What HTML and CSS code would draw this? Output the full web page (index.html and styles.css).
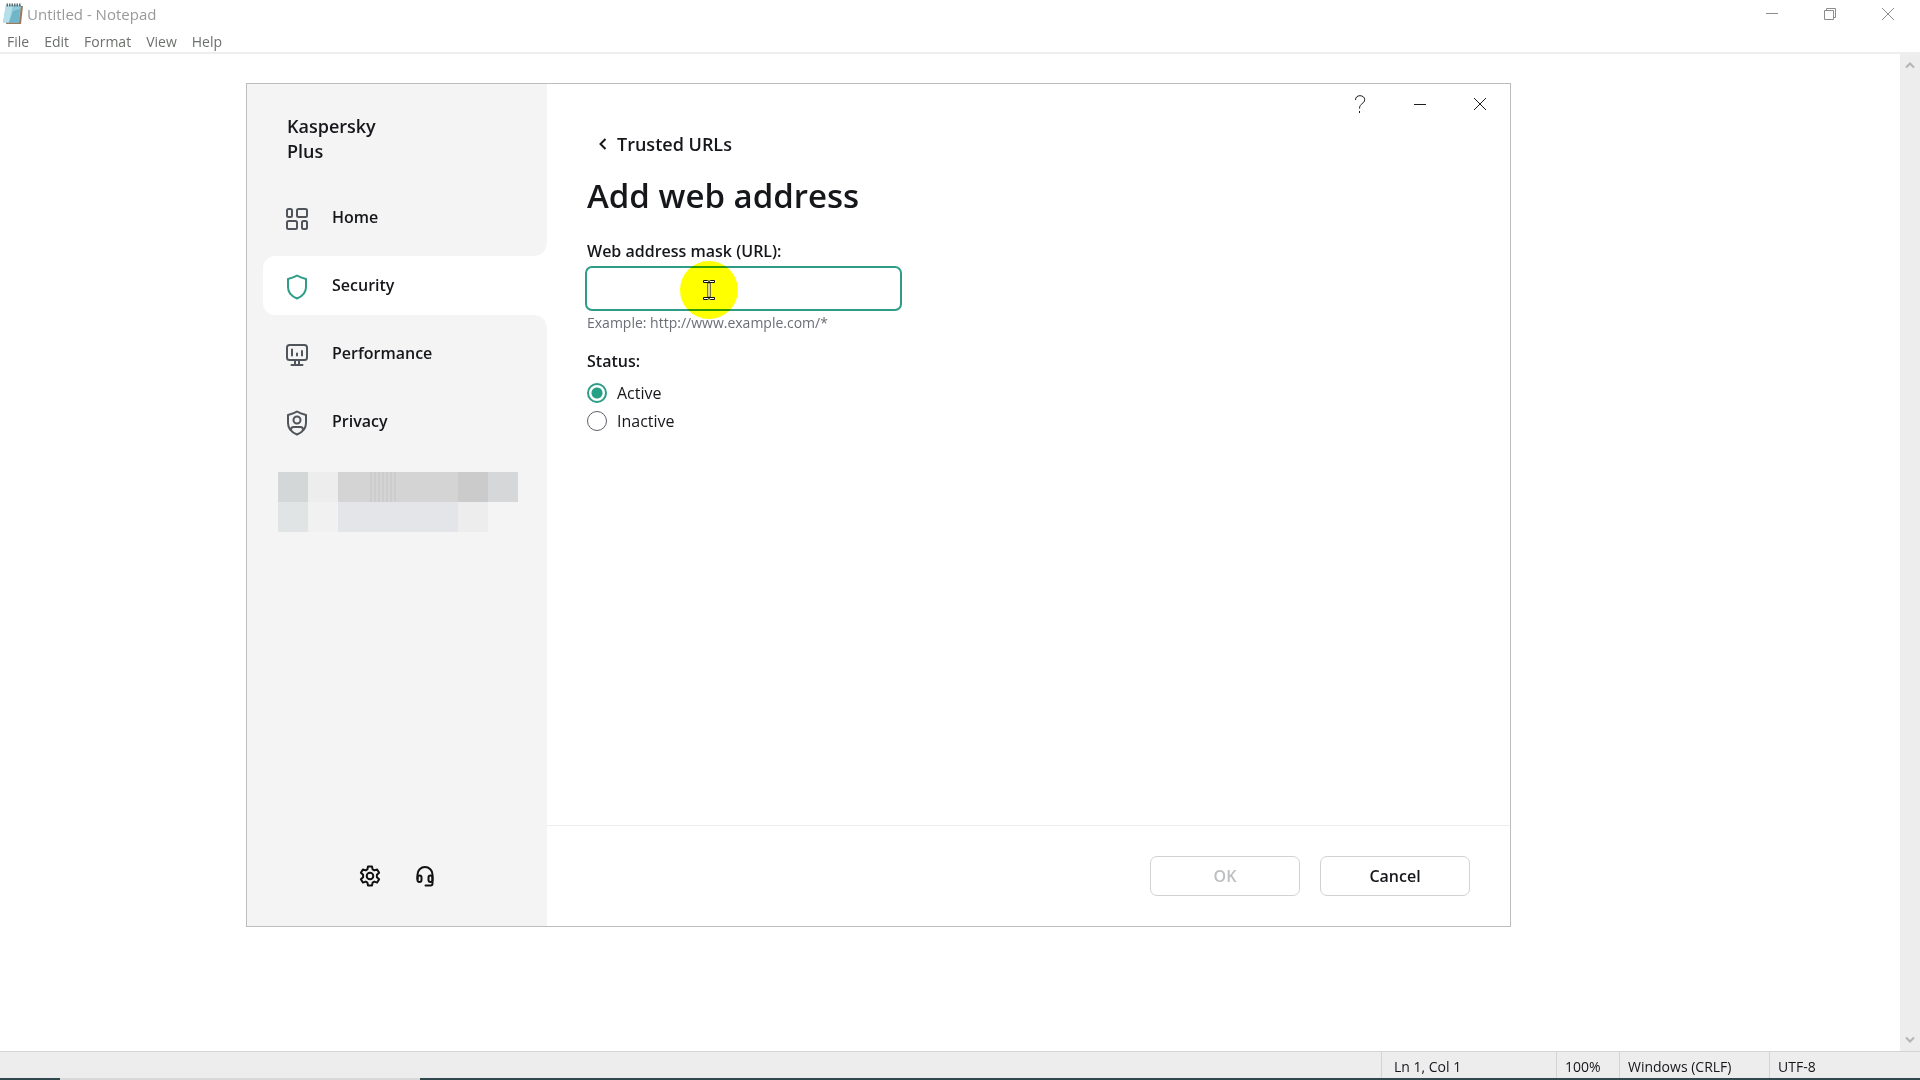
FILE: index.html
```html
<!DOCTYPE html>
<html lang="en">
<head>
<meta charset="utf-8">
<title>Untitled - Notepad</title>
<link rel="stylesheet" href="styles.css">
</head>
<body>
<div class="notepad">
  <header class="titlebar">
    <svg class="app-icon" width="20" height="22" viewBox="0 0 20 22">
      <path d="M5 3h15l-2 18H3z" fill="#9a7b62"/>
      <path d="M3 2h15l-2 17.500H0z" fill="#8fcbdc"/>
      <path d="M3 2h7L6 19.500H0z" fill="#b5e0ea"/>
      <path d="M10 8l7-2-1.500 13.500H6z" fill="#6fb6c8"/>
      <path d="M3.500 2h14" stroke="#5d6b70" stroke-width="3" stroke-dasharray="1.500 1"/>
    </svg>
    <span class="title">Untitled - Notepad</span>
    <div class="controls">
      <button aria-label="Minimize"><svg width="12" height="12" viewBox="0 0 12 12"><path d="M0 5.500h12"/></svg></button>
      <button aria-label="Restore"><svg width="12" height="12" viewBox="0 0 12 12"><path d="M.5 2.500h9v9h-9zM2.500 2.500v-2h9v9h-2"/></svg></button>
      <button aria-label="Close"><svg width="12" height="12" viewBox="0 0 12 12"><path d="M0 0l12 12M12 0L0 12"/></svg></button>
    </div>
  </header>
  <nav class="menubar">
    <button>File</button><button>Edit</button><button>Format</button><button>View</button><button>Help</button>
  </nav>
  <main class="editor">
    <div class="scrollbar">
      <svg width="10" height="8" viewBox="0 0 10 8"><path d="M1 6.500l4-4 4 4"/></svg>
      <svg width="10" height="8" viewBox="0 0 10 8"><path d="M1 1.500l4 4 4-4"/></svg>
    </div>
  </main>
  <footer class="statusbar">
    <span class="cell position">Ln 1, Col 1</span>
    <span class="cell zoom">100%</span>
    <span class="cell ending">Windows (CRLF)</span>
    <span class="cell encoding">UTF-8</span>
  </footer>
  <div class="taskbar"><span class="task-gap"></span><span class="task-active"></span></div>
</div>

<section class="window" aria-label="Kaspersky Plus">
  <aside class="sidebar">
    <div class="brand">Kaspersky<br>Plus</div>
    <nav class="nav">
      <a href="#home" class="item">
        <svg width="24" height="26" viewBox="0 0 24 26"><rect x="2" y="3" width="5" height="8" rx="1.500"/><rect x="12" y="3" width="10" height="8" rx="1.500"/><rect x="2" y="15" width="10" height="8" rx="1.500"/><rect x="17" y="15" width="5" height="8" rx="1.500"/></svg>
        <span>Home</span></a>
      <a href="#security" class="item active">
        <svg width="24" height="26" viewBox="0 0 24 26"><path d="M12 1.500C9 3.500 6 4.300 3 5v8c0 5.500 4 9.500 9 11.500 5-2 9-6 9-11.500V5c-3-.7-6-1.500-9-3.500z"/></svg>
        <span>Security</span></a>
      <a href="#performance" class="item">
        <svg width="24" height="26" viewBox="0 0 24 26"><rect x="2" y="3" width="20" height="15" rx="2.500"/><path d="M7 7.500v6M12 11.500v2M17 9v4.500M10 18v5M14 18v5M6.500 23h11"/></svg>
        <span>Performance</span></a>
      <a href="#privacy" class="item">
        <svg width="24" height="26" viewBox="0 0 24 26"><path d="M12 1.500C9 3.500 6 4.300 3 5v8c0 5.500 4 9.500 9 11.500 5-2 9-6 9-11.500V5c-3-.7-6-1.500-9-3.500z"/><circle cx="12" cy="10" r="3.500"/><path d="M6 19.500c0-2 1-2.500 2.500-2.500h7c1.500 0 2.500.5 2.500 2.500"/></svg>
        <span>Privacy</span></a>
    </nav>
    <div class="redacted" aria-hidden="true">
      <i class="b1"></i><i class="b2"></i><i class="b3"></i><i class="b3 striped"></i><i class="b3"></i><i class="b3"></i><i class="b4"></i><i class="b5"></i>
      <i class="b6"></i><i class="b7"></i><i class="b8"></i><i class="b8"></i><i class="b8"></i><i class="b8"></i><i class="b2"></i>
    </div>
    <div class="tools">
      <button aria-label="Settings"><svg width="22" height="22" viewBox="0 0 22 22"><path d="M9 1.500h4l.6 2.900 1.700 1 2.800-1 2 3.400-2.200 2v2.400l2.200 2-2 3.400-2.800-1-1.700 1-.6 2.900H9l-.6-2.900-1.700-1-2.800 1-2-3.400 2.200-2V9.800l-2.200-2 2-3.400 2.800 1 1.700-1z"/><circle cx="11" cy="11" r="3.300"/></svg></button>
      <button aria-label="Support"><svg width="22" height="22" viewBox="0 0 22 22"><path d="M3.500 14V9.500a7.500 7.500 0 0 1 15 0V18.500c0 1.500-.5 2-2 2H11.500"/><rect x="3.500" y="10.500" width="4" height="6.500" rx="2"/><rect x="14.500" y="10.500" width="4" height="6.500" rx="2"/></svg></button>
    </div>
  </aside>
  <form class="content">
    <div class="caption">
      <button type="button" aria-label="Help"><svg width="12" height="20" viewBox="0 0 12 20"><path d="M1.500 6C1.500 3 3.500 1.700 6 1.700S10.700 3.200 10.700 5.700C10.700 9.500 5.500 9.500 5.500 14.500M5.500 17v2"/></svg></button>
      <button type="button" aria-label="Minimize"><svg width="12" height="12" viewBox="0 0 12 12"><path d="M0 6.500h12"/></svg></button>
      <button type="button" aria-label="Close"><svg width="12" height="12" viewBox="0 0 12 12"><path d="M0 0l12 12M12 0L0 12"/></svg></button>
    </div>
    <div class="fields">
      <a href="#trusted" class="back"><svg width="8" height="12" viewBox="0 0 8 12"><path d="M6.500 1l-5 5 5 5"/></svg>Trusted URLs</a>
      <h1>Add web address</h1>
      <label class="label" for="url">Web address mask (URL):</label>
      <div class="url-box">
        <input id="url" class="url" type="text">
        <div class="pointer">
          <svg width="12" height="20" viewBox="0 0 12 20"><path d="M4.500 3h3v14h-3z" fill="#ddd890" stroke="#77733a"/><path d="M.5.500h4l1.500 1 1.500-1h4v2h-11zM.5 17.500h11v2h-4l-1.500-1-1.500 1h-4z" fill="#fff" stroke="#111"/></svg>
        </div>
      </div>
      <p class="hint">Example: http://www.example.com/*</p>
      <fieldset class="status">
        <legend class="label">Status:</legend>
        <label class="option"><input type="radio" name="status" checked>Active</label>
        <label class="option"><input type="radio" name="status">Inactive</label>
      </fieldset>
    </div>
    <div class="actions">
      <button type="button" disabled>OK</button>
      <button type="button">Cancel</button>
    </div>
  </form>
</section>
</body>
</html>
```

FILE: styles.css
```css
* { box-sizing: border-box; }
body {
  margin: 0;
  background: #fff;
  color: #16171b;
  font-family: "Open Sans", "Noto Sans", sans-serif;
  font-size: 16px;
}
button {
  padding: 0;
  border: 0;
  background: none;
  color: inherit;
  font: inherit;
}
a { color: inherit; text-decoration: none; }
svg { display: block; flex: none; fill: none; }

/* Notepad */
.notepad {
  display: flex;
  flex-direction: column;
  height: 100vh;
}
.titlebar {
  display: flex;
  align-items: center;
  height: 28px;
  padding-left: 3px;
  color: #999;
  font-size: 15px;
}
.title { padding-left: 4px; }
.controls {
  display: flex;
  margin-left: auto;
  align-self: stretch;
  padding-right: 3px;
}
.controls button {
  display: flex;
  align-items: center;
  justify-content: center;
  width: 58px;
}
.controls svg { stroke: #8c8c8c; }
.menubar {
  display: flex;
  gap: 15px;
  height: 26px;
  padding: 2px 7px 0;
  border-bottom: 2px solid #eee;
  color: #6c706c;
  font-size: 14px;
}
.editor {
  display: flex;
  justify-content: flex-end;
  flex: 1;
}
.scrollbar {
  display: flex;
  flex-direction: column;
  justify-content: space-between;
  align-items: center;
  width: 20px;
  padding: 7px 0;
  background: #ededed;
}
.scrollbar svg { stroke: #b4b4b4; stroke-width: 2; }
.statusbar {
  display: flex;
  justify-content: flex-end;
  height: 27px;
  border-top: 1px solid #d4d4d0;
  background: #ededed;
  font-size: 14px;
  line-height: 29px;
}
.cell { border-left: 1px solid #d4d4d4; padding-left: 8px; white-space: nowrap; }
.position { width: 175px; padding-left: 12px; }
.zoom { width: 63px; }
.ending { width: 150px; }
.encoding { width: 151px; }
.taskbar { display: flex; height: 2px; background: #33474f; }
.task-gap { width: 60px; }
.task-active { width: 360px; background: #d8d8d8; }

/* Kaspersky window */
.window {
  position: absolute;
  inset: 83px 409px 153px 246px;
  display: flex;
  border: 1px solid #bdbdbd;
  background: #fff;
}
.sidebar {
  display: flex;
  flex-direction: column;
  width: 300px;
  background: #f4f4f4;
}
.brand {
  padding: 30px 40px 0;
  font-size: 18px;
  font-weight: 600;
  line-height: 25px;
}
.nav {
  display: flex;
  flex-direction: column;
  gap: 9px;
  padding: 24px 0 0 16px;
}
.item {
  position: relative;
  display: flex;
  align-items: center;
  gap: 23px;
  height: 59px;
  padding-left: 22px;
  padding-top: 2px;
  font-weight: 600;
}
.item span { padding-bottom: 4px; }
.item svg { stroke: #50555c; stroke-width: 2; stroke-linecap: round; stroke-linejoin: round; }
.item.active { border-radius: 12px 0 0 12px; background: #fff; }
.item.active svg { stroke: #2f9c87; }
/* the concave corners above and below the selected tab */
.item.active::before,
.item.active::after {
  content: "";
  position: absolute;
  right: 0;
  width: 12px;
  height: 12px;
}
.item.active::before { bottom: 100%; background: radial-gradient(circle at 0 0, #f4f4f4 11px, #fff 12px); }
.item.active::after { top: 100%; background: radial-gradient(circle at 0 100%, #f4f4f4 11px, #fff 12px); }
.redacted {
  display: grid;
  grid-template-columns: repeat(8, 30px);
  grid-auto-rows: 30px;
  padding: 21px 0 0 31px;
}
.b1 { background: #d3d7d8; }
.b2 { background: #ededee; }
.b3 { background: #d4d4d4; }
.striped { background: repeating-linear-gradient(90deg, #d4d4d4 0 2px, #cdcdcd 2px 4px); }
.b4 { background: #cbcbcb; }
.b5 { background: #d6d7d9; }
.b6 { background: #e0e4e5; }
.b7 { background: #f1f1f2; }
.b8 { background: #e4e5e8; }
.tools {
  display: flex;
  gap: 33px;
  margin-top: auto;
  padding: 0 0 39px 112px;
}
.tools svg { stroke: #111; stroke-width: 2; stroke-linejoin: round; stroke-linecap: round; }
.content {
  display: flex;
  flex-direction: column;
  flex: 1;
}
.caption { display: flex; justify-content: flex-end; height: 40px; }
.caption button {
  display: flex;
  align-items: center;
  justify-content: center;
  width: 60px;
}
.caption svg { stroke: #1c1c1c; }
.fields {
  display: flex;
  flex-direction: column;
  align-items: flex-start;
  flex: 1;
  padding-left: 40px;
}
.back {
  display: flex;
  align-items: center;
  gap: 10px;
  padding-left: 12px;
  margin-top: 8px;
  font-size: 18px;
  font-weight: 600;
  line-height: 24px;
}
.back svg { stroke: #16171b; stroke-width: 2; }
h1 {
  margin: 16px 0 0;
  font-size: 33px;
  font-weight: 600;
  line-height: 48px;
}
.label {
  padding: 0;
  font-size: 16px;
  font-weight: 600;
  line-height: 24px;
}
.fields > .label { margin-top: 19px; }
.url-box { position: relative; margin: 3px 0 0 -2px; }
.url {
  display: block;
  width: 317px;
  height: 45px;
  padding: 0 12px;
  border: 2px solid #2f9c87;
  border-radius: 7px;
  outline: 0;
  background: #fff;
  font: inherit;
}
.pointer {
  position: absolute;
  left: 95px;
  top: -5px;
  display: flex;
  align-items: center;
  justify-content: center;
  width: 58px;
  height: 58px;
  border-radius: 50%;
  background: #ff0;
  mix-blend-mode: multiply;
}
.hint { margin: 2px 0 0; color: #6b6e75; font-size: 14px; line-height: 20px; }
.status {
  display: flex;
  flex-direction: column;
  margin: 16px 0 0;
  padding: 0;
  border: 0;
}
.status .label { margin-bottom: 6px; }
.option { display: flex; align-items: center; gap: 10px; height: 28px; }
.option input {
  appearance: none;
  width: 20px;
  height: 20px;
  margin: 0;
  border: 1px solid #5c6068;
  border-radius: 50%;
  background: #fff;
}
.option input:checked {
  border: 2px solid #2f9c87;
  background: radial-gradient(circle, #23a086 5px, #fff 6px);
}
.actions {
  display: flex;
  justify-content: flex-end;
  gap: 20px;
  padding: 30px 40px;
  border-top: 1px solid #eee;
}
.actions button {
  width: 150px;
  height: 40px;
  border: 1px solid #d2d2d2;
  border-radius: 7px;
  font-weight: 600;
}
.actions button:disabled { color: #bcbec2; }
```
